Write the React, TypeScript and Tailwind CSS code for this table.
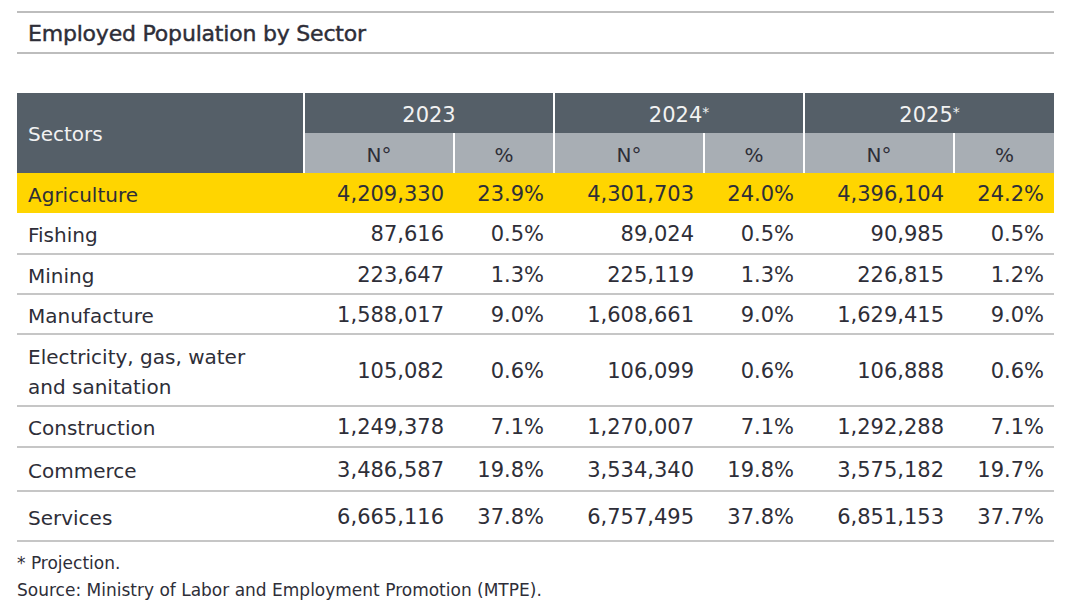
const rows = [
  { name: 'Agriculture', v: ['4,209,330', '23.9%', '4,301,703', '24.0%', '4,396,104', '24.2%'], h: 'h-[40px]', hl: true },
  { name: 'Fishing', v: ['87,616', '0.5%', '89,024', '0.5%', '90,985', '0.5%'], h: 'h-[41px]' },
  { name: 'Mining', v: ['223,647', '1.3%', '225,119', '1.3%', '226,815', '1.2%'], h: 'h-[40px]' },
  { name: 'Manufacture', v: ['1,588,017', '9.0%', '1,608,661', '9.0%', '1,629,415', '9.0%'], h: 'h-[40px]' },
  { name: 'Electricity, gas, water\nand sanitation', v: ['105,082', '0.6%', '106,099', '0.6%', '106,888', '0.6%'], h: 'h-[72px]' },
  { name: 'Construction', v: ['1,249,378', '7.1%', '1,270,007', '7.1%', '1,292,288', '7.1%'], h: 'h-[41px]' },
  { name: 'Commerce', v: ['3,486,587', '19.8%', '3,534,340', '19.8%', '3,575,182', '19.7%'], h: 'h-[44px]' },
  { name: 'Services', v: ['6,665,116', '37.8%', '6,757,495', '37.8%', '6,851,153', '37.7%'], h: 'h-[50px]' },
]

const years = ['2023', '2024*', '2025*']

export default function App() {
  return (
    <div className="w-[1080px] h-[605px] bg-white text-[#2e2e38] font-['DejaVu_Sans',sans-serif] pl-[17px] pt-[11px]">
      <div className="w-[1037px] border-t-2 border-b-2 border-[#bdbdbd] h-[43px] flex items-center pl-[11px]">
        <h1 className="text-[22px] tracking-[-0.2px] pt-[2px] [-webkit-text-stroke:0.45px_#2e2e38]">Employed Population by Sector</h1>
      </div>

      <table className="w-[1037px] mt-[39px] border-collapse table-fixed">
        <colgroup>
          <col className="w-[287px]" />
          <col className="w-[150px]" />
          <col className="w-[100px]" />
          <col className="w-[150px]" />
          <col className="w-[100px]" />
          <col className="w-[150px]" />
          <col className="w-[100px]" />
        </colgroup>
        <thead>
          <tr className="h-[40px]">
            <th rowSpan={2} className="bg-[#555f68] text-[#f2f2f2] text-left font-normal text-[20px] pl-[11px] pt-[2px] border-r-2 border-white">
              Sectors
            </th>
            {years.map((y, i) => (
              <th
                key={y}
                colSpan={2}
                className={`bg-[#555f68] text-[#f2f2f2] font-normal text-[21px] pt-[5px] ${i < 2 ? 'border-r-2 border-white' : ''}`}
              >
                {y.replace('*', '')}
                {y.endsWith('*') && <span className="text-[14px] align-top relative top-[2px]">*</span>}
              </th>
            ))}
          </tr>
          <tr className="h-[40px]">
            {[0, 1, 2, 3, 4, 5].map((i) => (
              <th
                key={i}
                className={`bg-[#a8aeb4] font-normal text-[20px] pt-[3px] text-[#2e2e38] ${i < 5 ? 'border-r-2 border-white' : ''}`}
              >
                {i % 2 === 0 ? 'N°' : '%'}
              </th>
            ))}
          </tr>
        </thead>
        <tbody>
          {rows.map((r) => (
            <tr key={r.name} className={`${r.h} ${r.hl ? 'bg-[#ffd500]' : 'border-b-2 border-[#c6c6c6]'}`}>
              <td className="pl-[11px] pt-[3px] text-[20px] leading-[30px] whitespace-pre-line">{r.name}</td>
              {r.v.map((v, i) => (
                <td key={i} className="text-right pr-[10px] pt-[3px] text-[21px]">
                  {v}
                </td>
              ))}
            </tr>
          ))}
        </tbody>
      </table>

      <div className="text-[17px] mt-[8px] leading-[27px]">
        <p>* Projection.</p>
        <p>Source: Ministry of Labor and Employment Promotion (MTPE).</p>
      </div>
    </div>
  )
}
